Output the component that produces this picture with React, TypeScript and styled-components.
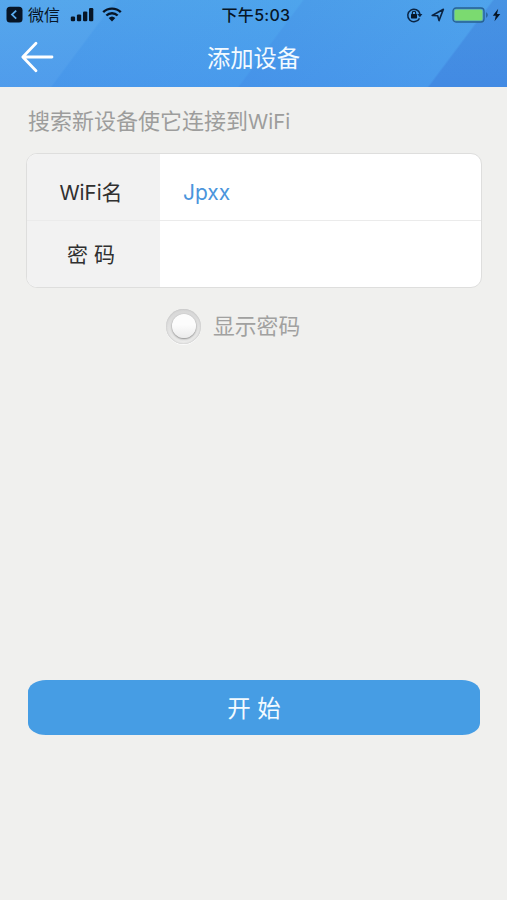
import React from "react";
import styled, { createGlobalStyle } from "styled-components";

const GlobalStyle = createGlobalStyle`
  * { box-sizing: border-box; }
  body {
    margin: 0;
    background: #f0f0ee;
    font-family: Inter, "Noto Sans CJK SC", sans-serif;
  }
`;

const Screen = styled.main`
  width: 507px;
  height: 900px;
  overflow: hidden;
  background: #f0f0ee;
`;

const Header = styled.header`
  height: 87px;
  background:
    linear-gradient(
      126.8deg,
      rgba(255, 255, 255, 0.03) 92px,
      rgba(30, 90, 215, 0.04) 94px,
      rgba(50, 170, 255, 0.06) 242px,
      rgba(30, 90, 215, 0.1) 244px,
      rgba(60, 160, 245, 0.06) 394px,
      rgba(30, 70, 190, 0.18) 396px
    ),
    linear-gradient(#50a4eb, #4a99eb);
`;

const StatusBar = styled.div`
  display: grid;
  grid-template-columns: 1fr auto 1fr;
  align-items: center;
  height: 29px;
  padding: 0 6px 0 6px;
  color: #071526;
  svg { display: block; }
`;

const StatusGroup = styled.div<{ $end?: boolean }>`
  display: flex;
  align-items: center;
  justify-content: ${(p) => (p.$end ? "flex-end" : "flex-start")};
`;

const BackApp = styled.span`
  margin: 0 10px 0 5px;
  font-size: 16px;
  line-height: 28px;
`;

const Clock = styled.time`
  font-size: 16px;
  font-weight: 500;
  line-height: 28px;
  letter-spacing: 0.3px;
  padding-left: 5px;
`;

const IconGap = styled.span<{ $w: number }>`
  flex: none;
  width: ${(p) => p.$w}px;
`;

const NavBar = styled.div`
  display: grid;
  grid-template-columns: 60px 1fr 60px;
  align-items: center;
  height: 58px;
`;

const BackButton = styled.button`
  padding: 0 0 2px 20px;
  border: 0;
  background: none;
  svg { display: block; }
`;

const Title = styled.h1`
  margin: 0;
  padding-top: 2px;
  color: #f3faff;
  font-size: 23.3px;
  font-weight: 400;
  line-height: 56px;
  text-align: center;
`;

const Hint = styled.p`
  margin: 0;
  padding: 3px 0 0 28px;
  height: 66px;
  color: #9d9d9c;
  font-size: 22px;
  font-weight: 400;
  line-height: 63px;
`;

const HintLatin = styled.span`
  font-size: 20.5px;
`;

const Form = styled.section`
  margin: 0 25px 0 26px;
  height: 135px;
  overflow: hidden;
  border: 1px solid #dededd;
  border-radius: 11px;
  background: #fff;
`;

const Field = styled.div<{ $last?: boolean }>`
  display: grid;
  grid-template-columns: 133px 1fr;
  height: ${(p) => (p.$last ? 66 : 67)}px;
  border-bottom: ${(p) => (p.$last ? "0" : "1px solid #ebebeb")};
`;

const Label = styled.label<{ $drop: number }>`
  padding-top: ${(p) => p.$drop}px;
  padding-right: 5px;
  background: #f2f2f2;
  color: #303030;
  font-size: 21px;
  line-height: 52px;
  text-align: center;
`;

const LabelLatin = styled.span`
  font-size: 20.5px;
`;

const Value = styled.div`
  padding: 13px 0 0 23px;
  color: #4b95dc;
  font-size: 21px;
  line-height: 52px;
`;

const Reveal = styled.label`
  display: flex;
  align-items: center;
  height: 76px;
  padding-left: 166px;
  gap: 12px;
  color: #a1a1a0;
  font-size: 21.8px;
  line-height: 70px;
`;

const RevealText = styled.span`
  padding-bottom: 1px;
`;

const Knob = styled.span`
  display: grid;
  place-items: center;
  width: 35px;
  height: 35px;
  border-radius: 50%;
  background: linear-gradient(#d6d6d6, #ececeb);
  box-shadow: inset 0 0 2px #b4b4b4, 0 1px 0 #fafafa;
  &::before {
    content: "";
    width: 24px;
    height: 24px;
    border-radius: 50%;
    background: linear-gradient(#fcfcfc 45%, #ebebeb);
    box-shadow: 0 1px 2px #8c8c8c, 0 0 1px #bbb;
  }
`;

const StartButton = styled.button`
  display: block;
  width: 452px;
  height: 55px;
  margin: 316px 0 0 28px;
  padding: 2px 0 0;
  border: 0;
  border-radius: 18px / 12px;
  background: #469de4;
  color: #f3faff;
  font: 400 23.5px/53px Inter, "Noto Sans CJK SC", sans-serif;
`;

const ReturnIcon = () => (
  <svg width="17" height="17" viewBox="0 0 17 17">
    <rect x="0.5" y="0.8" width="16" height="15.6" rx="3.5" fill="#071526" />
    <path d="M10.2 4.6 6 8.6l4.2 4" fill="none" stroke="#5badef" strokeWidth="1.8" />
  </svg>
);

const SignalIcon = () => (
  <svg width="24" height="15" viewBox="0 0 24 15" fill="#071526">
    <rect x="0.8" y="9.5" width="4.3" height="4.8" rx="1.2" />
    <rect x="6.9" y="7.4" width="4.3" height="6.9" rx="1.2" />
    <rect x="13" y="4.4" width="4.3" height="9.9" rx="1.2" />
    <rect x="19" y="1" width="4.3" height="13.3" rx="1.2" />
  </svg>
);

const WifiIcon = () => (
  <svg width="20" height="15" viewBox="0 0 20 15">
    <path d="M1.2 5.2a12.5 12.5 0 0 1 17.6 0M4.4 8.5a8 8 0 0 1 11.2 0" fill="none" stroke="#071526" strokeWidth="2.4" />
    <path d="M6.7 11a4.8 4.8 0 0 1 6.6 0L10 14.4Z" fill="#071526" />
  </svg>
);

const RotationLockIcon = () => (
  <svg width="17" height="16" viewBox="0 0 17 16">
    <path d="M13.5 11.3A6.2 6.2 0 1 1 14 7" fill="none" stroke="#0b2443" strokeWidth="1.5" />
    <path d="M11.2 7h5.2l-2.5 3.3Z" fill="#0b2443" />
    <rect x="5" y="7" width="6" height="4.4" rx="0.6" fill="#071526" />
    <path d="M6.3 7.2V6a1.7 1.7 0 0 1 3.4 0v1.2" fill="none" stroke="#071526" strokeWidth="1.1" />
  </svg>
);

const LocationIcon = () => (
  <svg width="14" height="14" viewBox="0 0 14 14">
    <path d="M1.2 7.5 12.4 1.3 8 12.6 6.7 7.7Z" fill="none" stroke="#0b2443" strokeWidth="1.6" strokeLinejoin="round" />
  </svg>
);

const BatteryIcon = () => (
  <svg width="37" height="16" viewBox="0 0 37 16">
    <rect x="1" y="1" width="31" height="14" rx="3" fill="#4d9ad5" stroke="#276291" strokeWidth="1.3" />
    <rect x="2.5" y="2.5" width="28" height="11" rx="1.5" fill="#7bda70" />
    <path d="M34.2 5.3c2 1 2 4.4 0 5.4Z" fill="#276291" />
  </svg>
);

const BoltIcon = () => (
  <svg width="9" height="14" viewBox="0 0 9 14">
    <path d="M6.2.8.8 7.7h3L2.5 13.2 8.3 6H5Z" fill="#071526" />
  </svg>
);

const ArrowIcon = () => (
  <svg width="34" height="32" viewBox="0 0 34 32">
    <path d="M16 2.2 2.8 16 16 29.8M3.3 16H32" fill="none" stroke="#fff" strokeWidth="2.8" strokeLinecap="round" strokeLinejoin="round" />
  </svg>
);

export default function App() {
  return (
    <Screen>
      <GlobalStyle />
      <Header>
        <StatusBar>
          <StatusGroup>
            <ReturnIcon />
            <BackApp>微信</BackApp>
            <SignalIcon />
            <IconGap $w={8} />
            <WifiIcon />
          </StatusGroup>
          <Clock>下午5:03</Clock>
          <StatusGroup $end>
            <RotationLockIcon />
            <IconGap $w={8} />
            <LocationIcon />
            <IconGap $w={7} />
            <BatteryIcon />
            <IconGap $w={3} />
            <BoltIcon />
          </StatusGroup>
        </StatusBar>
        <NavBar>
          <BackButton aria-label="返回"><ArrowIcon /></BackButton>
          <Title>添加设备</Title>
        </NavBar>
      </Header>
      <Hint>搜索新设备使它连接到<HintLatin>WiFi</HintLatin></Hint>
      <Form>
        <Field>
          <Label $drop={13}><LabelLatin>WiFi</LabelLatin>名</Label>
          <Value>Jpxx</Value>
        </Field>
        <Field $last>
          <Label $drop={8}>密 码</Label>
          <Value />
        </Field>
      </Form>
      <Reveal>
        <Knob />
        <RevealText>显示密码</RevealText>
      </Reveal>
      <StartButton>开 始</StartButton>
    </Screen>
  );
}
